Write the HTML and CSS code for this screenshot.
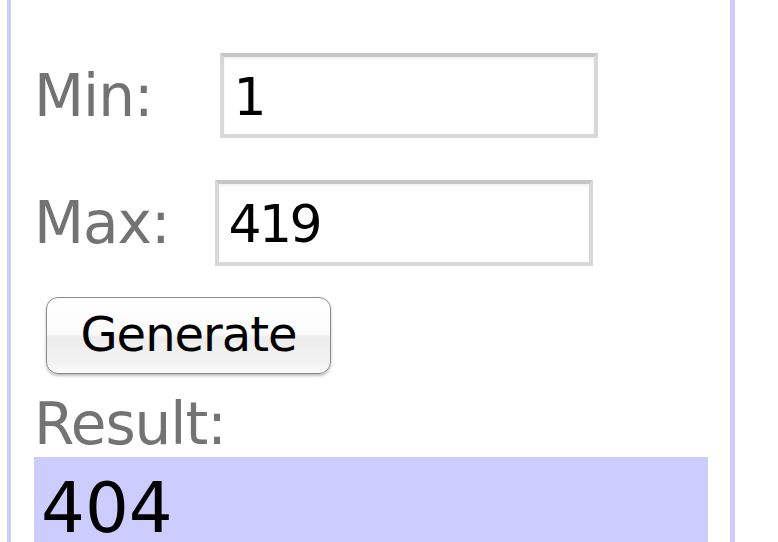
FILE: index.html
```html
<!DOCTYPE html>
<html>
<head>
<meta charset="utf-8">
<link rel="stylesheet" href="styles.css">
</head>
<body>
<div class="panel">
  <div class="row row--min">
    <span class="label">Min:</span>
    <input class="field field--min" type="text" value="1">
  </div>
  <div class="row row--max">
    <span class="label">Max:</span>
    <input class="field" type="text" value="419">
  </div>
  <button class="btn" type="button">Generate</button>
  <div class="result-label">Result:</div>
  <div class="result">404</div>
</div>
</body>
</html>
```
FILE: styles.css
```css
html, body {
  margin: 0;
  padding: 0;
  background: #ffffff;
  overflow: hidden;
  height: 100%;
}
.panel {
  box-sizing: border-box;
  margin-left: 7px;
  width: 728px;
  min-height: 100%;
  border-left: 4px solid #ccccff;
  border-right: 5px solid #ccccff;
  padding: 53px 0 0 23px;
  display: flex;
  flex-direction: column;
  align-items: flex-start;
  font-family: "DejaVu Sans", Verdana, sans-serif;
}
.row {
  display: flex;
  align-items: center;
}
.row--max {
  margin-top: 42px;
}
.label {
  font-size: 58px;
  line-height: 58px;
  letter-spacing: -1px;
  color: #737373;
}
.field {
  box-sizing: border-box;
  width: 378px;
  height: 86px;
  margin: 0 0 0 46px;
  padding: 2px 0 0 9px;
  border: 4px solid #d8d8d8;
  border-top-color: #c6c6c6;
  box-shadow: inset 0 2px 3px rgba(0, 0, 0, 0.06);
  background: #ffffff;
  font-family: "DejaVu Sans", Verdana, sans-serif;
  font-size: 52px;
  letter-spacing: -2.5px;
  color: #000000;
  outline: none;
}
.field--min {
  margin-left: 68px;
  height: 85px;
}
.btn {
  box-sizing: border-box;
  margin: 31px 0 0 12px;
  width: 285px;
  height: 77px;
  padding: 0 0 4px;
  border: 1.5px solid #8a8a8a;
  border-radius: 12px;
  background: linear-gradient(#ffffff 0%, #fbfbfb 48%, #ededed 52%, #f2f2f2 85%, #fafafa 100%);
  box-shadow: 0 2px 3px rgba(0, 0, 0, 0.25);
  font-family: "DejaVu Sans", Verdana, sans-serif;
  font-size: 48px;
  letter-spacing: -1px;
  color: #000000;
}
.result-label {
  margin-top: 21px;
  font-size: 58px;
  line-height: 58px;
  letter-spacing: -1px;
  color: #737373;
}
.result {
  box-sizing: border-box;
  margin-top: 4px;
  width: 674px;
  flex: 1;
  min-height: 84px;
  padding: 22px 0 0 7px;
  background: #ccccff;
  font-size: 69px;
  line-height: 58px;
  color: #000000;
}
```
